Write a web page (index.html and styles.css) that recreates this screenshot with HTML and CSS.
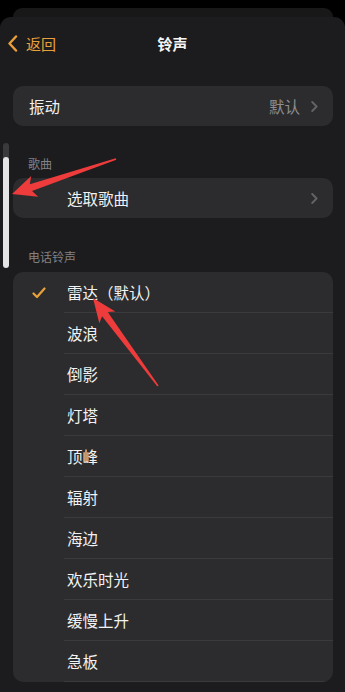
FILE: index.html
```html
<!DOCTYPE html>
<html lang="zh-CN">
<head>
<meta charset="utf-8">
<title>铃声</title>
<link rel="stylesheet" href="styles.css">
</head>
<body>
<div class="back-sheet"></div>
<main class="sheet">
  <header class="nav">
    <div class="back">
      <svg class="back-chev" width="11" height="17" viewBox="0 0 11 17"><path d="M9 1.5 L2.5 8.5 L9 15.5" fill="none" stroke="#eaa03a" stroke-width="2.4" stroke-linecap="round" stroke-linejoin="round"/></svg>
      <span>返回</span>
    </div>
    <h1 class="title">铃声</h1>
  </header>

  <section class="card single">
    <div class="cell">
      <span class="cell-label">振动</span>
      <span class="cell-value">默认</span>
      <svg class="chev" width="7" height="11" viewBox="0 0 7 11"><path d="M1.2 1 L5.6 5.5 L1.2 10" fill="none" stroke="#636366" stroke-width="1.9" stroke-linecap="round" stroke-linejoin="round"/></svg>
    </div>
  </section>

  <h2 class="section-head first">歌曲</h2>
  <section class="card single">
    <div class="cell indent">
      <span class="cell-label">选取歌曲</span>
      <svg class="chev" width="7" height="11" viewBox="0 0 7 11"><path d="M1.2 1 L5.6 5.5 L1.2 10" fill="none" stroke="#636366" stroke-width="1.9" stroke-linecap="round" stroke-linejoin="round"/></svg>
    </div>
  </section>

  <h2 class="section-head">电话铃声</h2>
  <section class="card list">
    <div class="row">
      <div class="check"><svg width="14" height="12" viewBox="0 0 14 12"><path d="M1.5 6.5 L5 10 L12.5 1.5" fill="none" stroke="#eaa03a" stroke-width="2.2" stroke-linecap="round" stroke-linejoin="round"/></svg></div>
      <div class="row-body">雷达（默认）</div>
    </div>
    <div class="row"><div class="check"></div><div class="row-body">波浪</div></div>
    <div class="row"><div class="check"></div><div class="row-body">倒影</div></div>
    <div class="row"><div class="check"></div><div class="row-body">灯塔</div></div>
    <div class="row"><div class="check"></div><div class="row-body">顶峰</div></div>
    <div class="row"><div class="check"></div><div class="row-body">辐射</div></div>
    <div class="row"><div class="check"></div><div class="row-body">海边</div></div>
    <div class="row"><div class="check"></div><div class="row-body">欢乐时光</div></div>
    <div class="row"><div class="check"></div><div class="row-body">缓慢上升</div></div>
    <div class="row"><div class="check"></div><div class="row-body">急板</div></div>
  </section>
</main>

<div class="scroll-track"></div>
<div class="scroll-thumb"></div>

<svg class="annotations" width="345" height="692" viewBox="0 0 345 692">
  <polygon fill="#ee3b3b" points="12,194 31.2,176 29.8,184.3 115.7,158.2 116.3,159.8 32,190.9 38.2,196.8"/>
  <polygon fill="#ee3b3b" points="93,298 115.3,311.4 107.7,312 158.6,385.5 157.4,386.5 102.1,316.2 99.3,323.2"/>
</svg>
</body>
</html>
```

FILE: styles.css
```css
* { box-sizing: border-box; }

html, body {
  margin: 0;
  padding: 0;
  background: #000;
  width: 345px;
  height: 692px;
  overflow: hidden;
  font-family: "Noto Sans CJK SC", "Noto Sans", sans-serif;
  color: #f2f2f2;
}

.back-sheet {
  margin: 8px 12px 0 13px;
  height: 9px;
  background: #181818;
  border-radius: 10px 10px 0 0;
}

.sheet {
  background: #1c1c1e;
  border-radius: 11px 11px 0 0;
  height: 675px;
  padding-top: 0;
}

.nav {
  height: 52px;
  display: flex;
  align-items: center;
  justify-content: center;
  position: relative;
}

.back {
  position: absolute;
  left: 7px;
  top: 0;
  height: 52px;
  display: flex;
  align-items: center;
  gap: 8px;
  color: #eaa03a;
  font-size: 15px;
}

.back-chev { display: block; }

.title {
  margin: 0;
  font-size: 15px;
  font-weight: 700;
  color: #f4f4f4;
}

.card {
  margin: 0 12px 0 13px;
  background: #2c2c2e;
  border-radius: 10px;
}

.card.single { height: 40px; }

.nav + .card { margin-top: 17px; }

.cell {
  height: 40px;
  display: flex;
  align-items: center;
  padding: 0 15px 0 16px;
  font-size: 15.5px;
}

.cell.indent { padding-left: 54px; }

.cell-label { flex: 1; }

.cell-value {
  color: #8e8e90;
  margin-right: 11px;
}

.chev { display: block; }

.section-head {
  margin: 0;
  padding: 31px 0 7px 28px;
  font-size: 12px;
  line-height: 16px;
  font-weight: 400;
  color: #828286;
}

.section-head.first { padding-top: 30px; padding-bottom: 6px; }

.list { overflow: hidden; }

.row {
  display: flex;
  height: 41px;
}

.check {
  width: 51px;
  flex: none;
  display: flex;
  align-items: center;
  padding-left: 19px;
}

.check svg { display: block; }

.row-body {
  flex: 1;
  display: flex;
  align-items: center;
  padding-left: 3px;
  font-size: 15.5px;
  border-bottom: 1px solid #3a3a3c;
}

.scroll-track {
  position: absolute;
  left: 3px;
  top: 143px;
  width: 6px;
  height: 18px;
  background: #3a3a3c;
  border-radius: 3px 3px 0 0;
}

.scroll-thumb {
  position: absolute;
  left: 3px;
  top: 157px;
  width: 6px;
  height: 111px;
  background: #e4e4e4;
  border-radius: 3px;
}

.annotations {
  position: absolute;
  left: 0;
  top: 0;
  pointer-events: none;
}
```
